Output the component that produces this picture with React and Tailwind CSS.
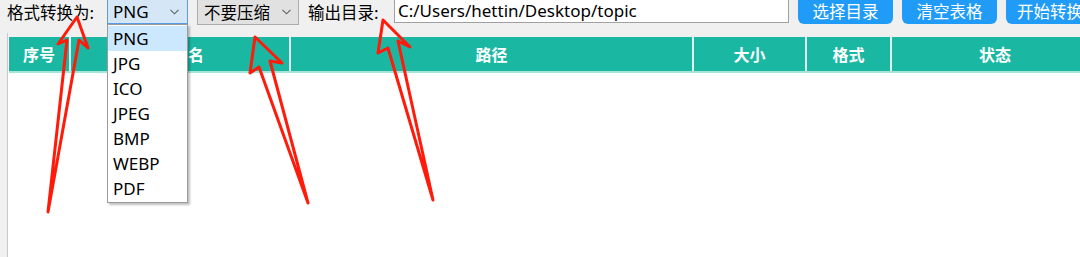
import React from "react";

const Chevron = () => (
  <svg width="9" height="6" viewBox="0 0 9 6" className="shrink-0">
    <path d="M0.5 0.8 L4.5 4.8 L8.5 0.8" fill="none" stroke="#606060" strokeWidth="1.1" />
  </svg>
);

const cols = [
  { label: "序号", w: "w-[60px]" },
  { label: "文件名", w: "w-[218px]" },
  { label: "路径", w: "w-[401px]" },
  { label: "大小", w: "w-[111px]" },
  { label: "格式", w: "w-[83px]" },
  { label: "状态", w: "w-[206px]" },
];

const items = ["PNG", "JPG", "ICO", "JPEG", "BMP", "WEBP", "PDF"];

const cjk = { fontFamily: '"Noto Sans CJK SC", sans-serif' };

export default function App() {
  return (
    <div
      className="relative w-[1080px] h-[257px] overflow-hidden bg-[#f0f0f0] text-black"
      style={{ fontFamily: '"Noto Sans", "Noto Sans CJK SC", sans-serif' }}
    >
      {/* toolbar */}
      <div className="flex items-start h-[33px] text-[16.5px] leading-[24px]">
        <div className="shrink-0 ml-[7px] w-[100px]" style={cjk}>格式转换为:</div>
        <div className="shrink-0 flex items-center justify-between w-[81px] h-[24px] border border-[#569de5] border-t-0 bg-[#d5e7f7] pl-[5px] pr-[8px] text-[17px]">
          <span>PNG</span>
          <Chevron />
        </div>
        <div
          className="shrink-0 ml-[9px] flex items-center justify-between w-[102px] h-[25px] border border-[#adadad] border-t-0 bg-[#e1e1e1] pl-[6px] pr-[7px]"
          style={cjk}
        >
          <span>不要压缩</span>
          <Chevron />
        </div>
        <div className="shrink-0 ml-[9px] w-[86px]" style={cjk}>输出目录:</div>
        <div className="shrink-0 w-[395px] h-[23px] border border-[#a0a0a0] border-t-0 bg-white pl-[3px] text-[17px] leading-[22px]">
          C:/Users/hettin/Desktop/topic
        </div>
        <div className="shrink-0 ml-[9px] flex gap-[9px]" style={cjk}>
          <div className="shrink-0 -mt-[6px] w-[95px] h-[30px] rounded-[6px] bg-[#219bf8] text-white text-center pt-[5px]">选择目录</div>
          <div className="shrink-0 -mt-[6px] w-[95px] h-[30px] rounded-[6px] bg-[#219bf8] text-white text-center pt-[5px]">清空表格</div>
          <div className="shrink-0 -mt-[6px] w-[95px] h-[30px] rounded-[6px] bg-[#219bf8] text-white pl-[11px] pt-[5px] whitespace-nowrap">开始转换</div>
        </div>
      </div>

      {/* table */}
      <div className="ml-[7px] h-[224px] border-l border-[#c8c8c8] bg-white">
        <div className="h-[4px] bg-[#f0f0f0]" />
        <div className="ml-[1px] bg-[#dff4f0] overflow-hidden">
          <div className="flex gap-[2px] h-[34px] text-white font-bold text-[16px]" style={cjk}>
            {cols.map((c) => (
              <div key={c.label} className={`${c.w} shrink-0 bg-[#1ab8a3] flex items-center justify-center`}>
                {c.label}
              </div>
            ))}
          </div>
          <div className="h-[2px] bg-[#a6e4d8]" />
        </div>
      </div>

      {/* dropdown list */}
      <div className="absolute left-[107px] top-[24px] w-[81px] bg-white border border-[#9a9a9a] shadow-[2px_2px_2px_rgba(0,0,0,0.25)] text-[17px] py-[1px]">
        {items.map((it, i) => (
          <div
            key={it}
            className={`h-[25px] leading-[25px] pl-[5px] ${i === 0 ? "bg-[#cce8ff]" : ""}`}
          >
            {it}
          </div>
        ))}
      </div>

      {/* annotation arrows */}
      <svg className="absolute left-0 top-0 pointer-events-none" width="1080" height="257">
        <g fill="none" stroke="#ff1a0a" strokeWidth="3" strokeLinejoin="round" strokeLinecap="round">
          <polygon points="48,212 67,40 58,44 77,17 88,48 79,40" />
          <polygon points="308,203 259,67 250,73 255,37 282,63 270,61" />
          <polygon points="433,200 388,48 378,53 383,20 410,47 398,41" />
        </g>
      </svg>
    </div>
  );
}
